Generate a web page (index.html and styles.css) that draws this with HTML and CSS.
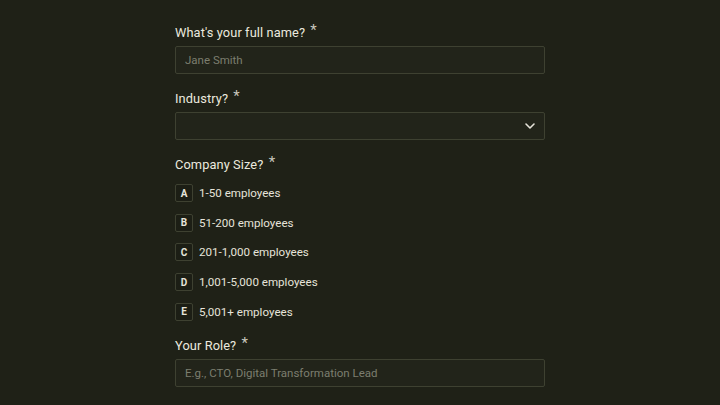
FILE: index.html
```html
<!DOCTYPE html>
<html lang="en">
    <head>
        <meta charset="UTF-8" />
        <meta name="viewport" content="width=device-width, initial-scale=1.0" />
        <link rel="stylesheet" href="styles.css">
        <title>Form</title>
    </head>
    <body>
        <form class="form">
            <div class="field">
                <label class="field__label">What's your full name? <span class="req">*</span></label>
                <input class="field__input" type="text" placeholder="Jane Smith" />
            </div>

            <div class="field">
                <label class="field__label">Industry? <span class="req">*</span></label>
                <div class="field__select">
                    <svg class="chevron" width="12" height="12" viewBox="0 0 12 12">
                        <path d="M2 4l4 4 4-4" fill="none" stroke="#e6e4da" stroke-width="1.6" stroke-linecap="round" stroke-linejoin="round" />
                    </svg>
                </div>
            </div>

            <div class="field">
                <label class="field__label">Company Size? <span class="req">*</span></label>
                <div class="options">
                    <div class="option"><span class="option__key">A</span>1-50 employees</div>
                    <div class="option"><span class="option__key">B</span>51-200 employees</div>
                    <div class="option"><span class="option__key">C</span>201-1,000 employees</div>
                    <div class="option"><span class="option__key">D</span>1,001-5,000 employees</div>
                    <div class="option"><span class="option__key">E</span>5,001+ employees</div>
                </div>
            </div>

            <div class="field">
                <label class="field__label">Your Role? <span class="req">*</span></label>
                <input class="field__input" type="text" placeholder="E.g., CTO, Digital Transformation Lead" />
            </div>
        </form>
    </body>
</html>
```

FILE: styles.css
```css
*,
*::before,
*::after {
    box-sizing: border-box;
}

body {
    margin: 0;
    min-height: 100vh;
    background: #1f2117;
    color: #ebe9df;
    font-family: Roboto, 'Liberation Sans', sans-serif;
}

.form {
    width: 370px;
    margin: 0 auto;
    padding-top: 24px;
    display: flex;
    flex-direction: column;
    gap: 16px;
}

.field__label {
    display: block;
    height: 18px;
    font-size: 12.8px;
    line-height: 18px;
    margin-bottom: 4px;
    letter-spacing: 0.1px;
}

.req {
    position: relative;
    top: -2px;
    margin-left: 2px;
    color: #c8c6bc;
    font-size: 15px;
    line-height: 0;
}

.field__input,
.field__select {
    display: block;
    width: 100%;
    height: 28px;
    background: #22241a;
    border: 1px solid #3e4131;
    border-radius: 2px;
    color: #ebe9df;
    font-family: inherit;
    font-size: 11.5px;
    padding: 0 9px;
    outline: none;
}

.field__input::placeholder {
    color: #7c7e6f;
}

.field__select {
    display: flex;
    align-items: center;
    justify-content: flex-end;
    padding-right: 8px;
}

.options {
    display: flex;
    flex-direction: column;
    gap: 11.7px;
    padding-top: 6px;
}

.option {
    display: flex;
    align-items: center;
    gap: 6px;
    height: 18px;
    font-size: 11.6px;
    color: #e6e4da;
}

.option__key {
    width: 18px;
    height: 18px;
    display: flex;
    align-items: center;
    justify-content: center;
    border: 1px solid #3e4131;
    border-radius: 2px;
    background: #1c1e15;
    font-size: 10px;
    font-weight: 700;
}
```
